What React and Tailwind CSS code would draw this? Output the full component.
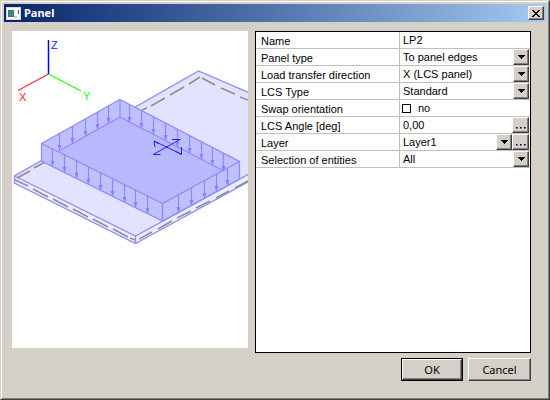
import { useState } from "react";

const raised =
  "bg-[#d4d0c8] border border-t-white border-l-white border-r-[#404040] border-b-[#404040] shadow-[inset_-1px_-1px_0_#808080]";

const SelectField = ({ id, options, children }) => (
  <>
    <div className="relative flex flex-1 min-w-0 h-4">
      <select
        id={id}
        className="flex-1 min-w-0 h-4 pl-[3px] appearance-none bg-white outline-none leading-4"
      >
        {options.map((option) => (
          <option key={option}>{option}</option>
        ))}
      </select>
      <span
        className={`absolute right-0 top-0 w-4 h-4 flex items-center justify-center pointer-events-none ${raised}`}
      >
        <svg width="7" height="4" viewBox="0 0 7 4" shapeRendering="crispEdges">
          <path d="M0 0h7v1H0zM1 1h5v1H1zM2 2h3v1H2zM3 3h1v1H3z" />
        </svg>
      </span>
    </div>
    {children}
  </>
);

const MoreButton = ({ label }) => (
  <button
    type="button"
    aria-label={label}
    className={`w-[17px] h-4 shrink-0 flex items-center justify-center pt-1.5 ${raised}`}
  >
    <svg width="10" height="2" viewBox="0 0 10 2">
      <path d="M0 0h1.6v1.6H0zM4 0h1.6v1.6H4zM8 0h1.6v1.6H8z" fill="#000040" />
    </svg>
  </button>
);

// x, y of the upper end of every load arrow
const backArrows = [
  [60, 133], [73, 126], [86, 119], [98, 112], [109, 106],
  [130, 105], [142, 111], [154, 117], [166, 123], [178, 130],
  [190, 136], [202, 142], [213, 148], [224, 154],
];
const frontArrows = [
  [53, 149], [65, 155], [77, 161], [89, 167], [101, 173],
  [113, 179], [125, 185], [136, 190], [148, 196],
  [179, 195], [192, 188], [205, 181], [217, 174], [228, 168],
];

const Arrows = ({ points }) => (
  <g>
    {points.map(([x, y]) => (
      <g key={x} transform={`translate(${x - 0.5} ${y})`}>
        <path d="M0 0V14" stroke="#8888ff" strokeWidth="1.2" />
        <path d="M-2 12H2L0 18Z" fill="#8484ff" />
      </g>
    ))}
  </g>
);

const PanelDrawing = () => (
  <svg
    viewBox="12 31 236 317"
    preserveAspectRatio="xMinYMin meet"
    className="block w-full h-full"
    fill="none"
  >
    {/* slab */}
    <path d="M14.5 176 198.5 71 260 98V167L135.5 236V243.5L14.5 183Z" fill="#e3e3ff" />
    <path d="M14.5 176 135.5 236 260 168V175.5L135.5 243.5 14.5 183Z" fill="#ececff" />
    <path
      d="M260 97.5 198.5 71 14.5 176V183L135.5 243.5 260 175.5M14.5 176 135.5 236 260 168M135.5 236V243.5"
      stroke="#8c8cff"
      strokeWidth="1.3"
    />
    <path
      d="M17 178 30 171M34 168 45 162M142 110 147 108M151 106 165 98M170 95 184 87M189 84 200 77M202 78 215 85M221 88 235 94M240 97 248 100M15 180 28 186M33 189 48 197M53 199 68 207M73 209 88 217M93 219 108 227M113 229 128 237M130 238 135 240M139 239 152 232M158 229 172 221M177 218 191 211M196 208 210 201M216 198 229 191M235 188 248 181"
      stroke="#8e8e92"
      strokeWidth="1.5"
    />

    {/* load block */}
    <path d="M41.5 143.5 120 99.5 239.5 161.5V179L162.5 221 41.5 161Z" fill="#c0c0ff" />
    <path d="M57.6 151.7 120 117 223 170.5 162.5 203.5Z" fill="#b8b8ff" />
    <path d="M57.6 151.7 120 117 223 170.5M120 99.5V117" stroke="#8c8cff" strokeWidth="1.2" />
    <Arrows points={backArrows} />
    <Arrows points={frontArrows} />
    <path
      d="M41.5 143.5 120 99.5 239.5 161.5V179L162.5 221 41.5 161ZM41.5 143.5 162.5 203.5 239.5 161.5M162.5 203.5V221"
      stroke="#8c8cff"
      strokeWidth="1.3"
    />

    {/* local axes mark */}
    <path
      d="M154 141 181 154M154 154 180 139.5M154 141 155 147M154 141 159 144M172 139.5H180.5M153 154.5H160.5M175 151 181.5 154.5V147"
      stroke="#2020ff"
    />

    {/* global axes */}
    <path d="M48.5 74 18 90.5" stroke="#ff3030" strokeWidth="1.3" />
    <path d="M48.5 74 81 91" stroke="#20ff20" strokeWidth="1.3" />
    <path d="M48.5 40V74" stroke="#0000f0" strokeWidth="1.5" />
    <g className="text-[11px]">
      <text x="51" y="49" fill="#2020ff">Z</text>
      <text x="19" y="101" fill="#ff2020">X</text>
      <text x="83" y="100" fill="#10ff10">Y</text>
    </g>
  </svg>
);

const App = () => {
  const [name, setName] = useState("LP2");
  const [angle, setAngle] = useState("0,00");
  const [swap, setSwap] = useState(false);

  const rows = [
    {
      id: "name",
      label: "Name",
      field: (
        <input
          id="name"
          type="text"
          value={name}
          onChange={(e) => setName(e.target.value)}
          className="flex-1 min-w-0 h-4 pl-[3px] outline-none"
        />
      ),
    },
    {
      id: "panel-type",
      label: "Panel type",
      field: <SelectField id="panel-type" options={["To panel edges"]} />,
    },
    {
      id: "direction",
      label: "Load transfer direction",
      field: <SelectField id="direction" options={["X (LCS panel)"]} />,
    },
    {
      id: "lcs-type",
      label: "LCS Type",
      field: <SelectField id="lcs-type" options={["Standard"]} />,
    },
    {
      id: "swap",
      label: "Swap orientation",
      field: (
        <>
          <input
            id="swap"
            type="checkbox"
            checked={swap}
            onChange={(e) => setSwap(e.target.checked)}
            className="appearance-none w-[9px] h-[9px] ml-0.5 mr-[7px] border border-black bg-white checked:bg-black"
          />
          <span>{swap ? "yes" : "no"}</span>
        </>
      ),
    },
    {
      id: "angle",
      label: "LCS Angle [deg]",
      field: (
        <>
          <input
            id="angle"
            type="text"
            value={angle}
            onChange={(e) => setAngle(e.target.value)}
            className="flex-1 min-w-0 h-4 pl-[3px] outline-none"
          />
          <MoreButton label="Edit angle" />
        </>
      ),
    },
    {
      id: "layer",
      label: "Layer",
      field: (
        <SelectField id="layer" options={["Layer1"]}>
          <MoreButton label="Edit layers" />
        </SelectField>
      ),
    },
    {
      id: "selection",
      label: "Selection of entities",
      field: <SelectField id="selection" options={["All"]} />,
    },
  ];

  return (
    <div className="min-h-screen flex flex-col bg-[#d4d0c8] border border-t-[#d4d0c8] border-l-[#d4d0c8] border-r-[#404040] border-b-[#404040] text-[11px] leading-4 text-black font-['Liberation_Sans',Arial,sans-serif]">
      <div className="flex-1 flex flex-col border border-t-white border-l-white border-r-[#808080] border-b-[#808080] p-0.5">
        <header className="h-[18px] flex items-center pl-0.5 pr-0.5 bg-linear-to-r from-[#0a246a] to-[#a6caf0]">
          <svg width="15" height="13" viewBox="0 0 15 13" shapeRendering="crispEdges">
            <path d="M0 0h15v13H0z" fill="#d8d8d8" />
            <path d="M1 1h13v11H1z" fill="#fff" />
            <path d="M2 3h6v7H2z" fill="#3c6c98" />
            <path d="M3 4h4v5H3z" fill="#38906c" />
            <path d="M8 9h3v2H8z" fill="#c8ccd0" />
            <path d="M12 3h1v4h-1z" fill="#306868" />
          </svg>
          <h1 className="flex-1 pl-[3px] font-bold text-white font-['Noto_Sans',sans-serif]">
            Panel
          </h1>
          <button
            type="button"
            aria-label="Close"
            className={`w-4 h-3.5 flex items-center justify-center ${raised}`}
          >
            <svg width="8" height="7" viewBox="0 0 8 7" shapeRendering="crispEdges">
              <path d="M0 0h2v1H0zM6 0h2v1H6zM1 1h2v1H1zM5 1h2v1H5zM2 2h4v1H2zM3 3h2v1H3zM2 4h4v1H2zM1 5h2v1H1zM5 5h2v1H5zM0 6h2v1H0zM6 6h2v1H6z" />
            </svg>
          </button>
        </header>

        <main className="flex-1 flex gap-[7px] pt-[9px] px-2">
          <div className="flex-[236] min-w-0 mb-[5px] bg-white">
            <PanelDrawing />
          </div>
          <div className="flex-[274] min-w-0 mr-[7px] border border-black bg-white">
            <table className="w-full table-fixed border-collapse">
              <tbody>
                {rows.map((row) => (
                  <tr key={row.id}>
                    <td className="w-36 h-[17px] p-0 align-top">
                      <label
                        htmlFor={row.id}
                        className="block h-[17px] pl-[5px] pt-px leading-4 border-b border-r border-[#c0c0c0]"
                      >
                        {row.label}
                      </label>
                    </td>
                    <td className="h-[17px] p-0 align-top">
                      <div className="h-[17px] pr-px flex items-center border-b border-[#c0c0c0]">
                        {row.field}
                      </div>
                    </td>
                  </tr>
                ))}
              </tbody>
            </table>
          </div>
        </main>

        <footer className="flex justify-end gap-[5px] pt-[5px] pr-[15px] pb-[15px] font-['Noto_Sans',sans-serif]">
          <button type="button" className="w-[62px] h-[23px] border border-black flex">
            <span className={`flex-1 h-full flex items-center justify-center ${raised}`}>OK</span>
          </button>
          <button type="button" className={`w-[63px] h-[23px] ${raised}`}>
            Cancel
          </button>
        </footer>
      </div>
    </div>
  );
};

export default App;
